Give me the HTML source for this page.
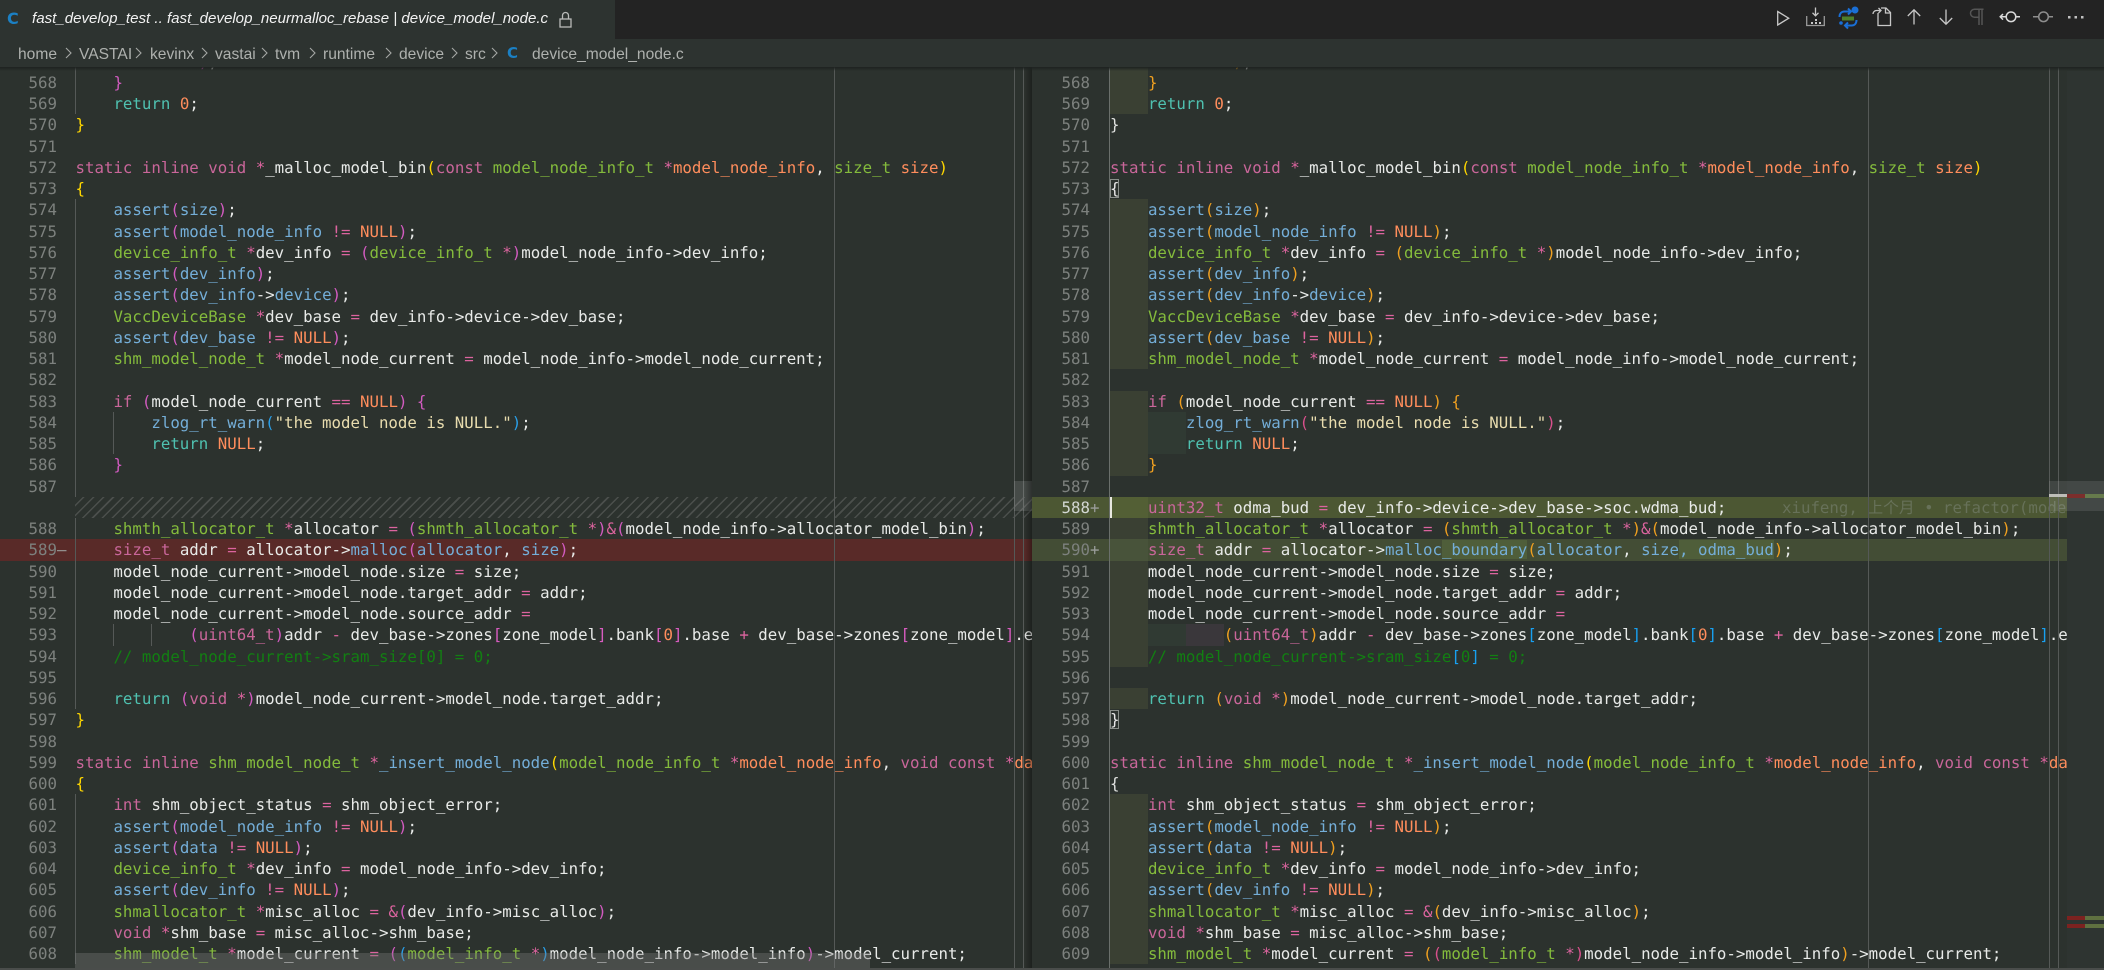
<!DOCTYPE html>
<html><head><meta charset="utf-8"><title>device_model_node.c</title>
<style>
html,body{margin:0;padding:0;width:2104px;height:970px;overflow:hidden;background:#2c322e}
*{box-sizing:border-box}
.abs{position:absolute}
.head{left:0;top:0;width:2104px;height:67px;z-index:5}
.tabbar{left:0;top:0;width:2104px;height:39px;background:#232323}
.tab{left:0;top:0;width:615px;height:39px;background:#2d3330}
.title{left:32px;top:9px;font:italic 15.08px/20px "Liberation Sans",sans-serif;color:#f2f2f2;white-space:pre}
.cic{font:bold 16px/20px "DejaVu Sans",sans-serif;color:#1b80c4}
.crumbs{left:0;top:39px;width:2104px;height:28px;background:#2d3330}
.cr{position:absolute;top:6px;font:15.6px/19px "Liberation Sans",sans-serif;color:#aeb1ae;white-space:pre}
.cr.cic{font:bold 15px/19px "DejaVu Sans",sans-serif;color:#1b80c4;top:5px}
.shadow{left:0;top:67px;width:2104px;height:4px;background:linear-gradient(#1e2220,rgba(30,34,32,0));z-index:5}
.pane{position:absolute;top:50.6px;height:919px;overflow:hidden;font-family:"DejaVu Sans Mono","Liberation Mono",monospace;font-size:15.75px;color:#e8eae8;text-rendering:geometricPrecision}
.L{left:0;width:1032px}
.R{left:1032px;width:1035px}
.l{position:relative;height:21.25px;line-height:21.25px;white-space:pre;background-repeat:no-repeat}
.l>i{position:absolute;left:0;top:0;font-style:normal;color:#7d817e;text-align:right}
.L .l>i{width:57px}
.R .l>i{width:58px}
.L .l{padding-left:75.5px}
.R .l{padding-left:78px}
.l>em{position:absolute;top:0;font-style:normal;color:#9a9d9a}
.L .g1{background-image:linear-gradient(#555957,#555957);background-position:75px 0;background-size:1px 100%}
.L .g2{background-image:linear-gradient(#555957,#555957),linear-gradient(#555957,#555957);background-position:75px 0,113px 0;background-size:1px 100%,1px 100%}
.L .g3{background-image:linear-gradient(#555957,#555957),linear-gradient(#555957,#555957),linear-gradient(#555957,#555957);background-position:75px 0,113px 0,151px 0;background-size:1px 100%,1px 100%,1px 100%}
.R .g1{background-image:linear-gradient(#3a4033,#3a4033);background-position:78px 0;background-size:38px 100%}
.R .g2{background-image:linear-gradient(#3a4033,#3a4033),linear-gradient(#303a33,#303a33);background-position:78px 0,116px 0;background-size:38px 100%,38px 100%}
.R .g3{background-image:linear-gradient(#3a4033,#3a4033),linear-gradient(#303a33,#303a33),linear-gradient(#3a373b,#3a373b);background-position:78px 0,116px 0,154px 0;background-size:38px 100%,38px 100%,38px 100%}
.del{background-color:#592a28}
.hatchwrap{position:relative;height:21.25px;padding-left:75px}
.hatchwrap div{height:100%;background:repeating-linear-gradient(135deg,#2c322e 0,#2c322e 5.5px,#4b4f4c 5.5px,#4b4f4c 7px)}
.add1{background-color:#4c5733}
.R .add1.g1{background-image:linear-gradient(#535f35,#535f35)}
.add2{background-color:#434d35}
.R .add2.g1{background-image:linear-gradient(#48533a,#48533a)}
.ch{background:#4f5e3a}
.k{color:#c9669a}.t{color:#84bb3c}.o{color:#dc649f}.p{color:#ff8d5c}.f{color:#74aed8}.r{color:#4fc1b0}.s{color:#e8dcae}.c{color:#127f12}
.y{color:#ffd700}
.R .w{color:#dfe1df}
.L .w{color:#ffd700}
.L .b{color:#d25bc0}.R .b{color:#f0a020}
.L .d{color:#2a9fe8}.R .d{color:#d8508c}
.L .e{color:#d85cc0}.R .e{color:#18a0f0}
.L .cb{color:#127f12}.R .cb{color:#18a0f0}
.box{outline:1px solid #8a8f8a;outline-offset:-1px;color:#e8e8e8}
.bl{color:#677159;font-family:"DejaVu Sans Mono","Noto Sans CJK SC",monospace;position:absolute;left:750px;top:0}
.v{position:absolute;width:1px;background:#555957;z-index:3}
.hs{left:75px;top:953px;width:795px;height:15px;background:rgba(121,121,121,.38);z-index:4}
.mk{position:absolute;z-index:4}
svg{position:absolute;overflow:visible}
</style></head><body>
<div class="abs head">
<div class="abs tabbar"></div>
<div class="abs tab"></div>
<div class="abs cic" style="left:7px;top:9px">C</div>
<div class="abs title">fast_develop_test .. fast_develop_neurmalloc_rebase | device_model_node.c</div>
<svg style="left:558px;top:11px" width="16" height="18" viewBox="0 0 16 18" fill="none" stroke="#b9bbb9" stroke-width="1.3"><rect x="2" y="8" width="11" height="8"/><path d="M4.5 8V4.5a3 3 0 0 1 6 0V8"/></svg>

<div class="abs crumbs">
<span class="cr" style="left:18px">home</span>
<span class="cr" style="left:79px">VASTAI</span>
<span class="cr" style="left:150px">kevinx</span>
<span class="cr" style="left:215px">vastai</span>
<span class="cr" style="left:275px">tvm</span>
<span class="cr" style="left:323px">runtime</span>
<span class="cr" style="left:399px">device</span>
<span class="cr" style="left:465px">src</span>
<span class="cr cic" style="left:507px">C</span>
<span class="cr" style="left:532px">device_model_node.c</span>
<svg style="left:0;top:0" width="520" height="28" fill="none" stroke="#a4a7a4" stroke-width="1.1"><path d="M66 9l5 5-5 5M136 9l5 5-5 5M202 9l5 5-5 5M262 9l5 5-5 5M310 9l5 5-5 5M386 9l5 5-5 5M452 9l5 5-5 5M492 9l5 5-5 5"/></svg>
</div>

<!-- toolbar icons -->
<svg style="left:0;top:0;z-index:6" width="2104" height="39" fill="none" stroke="#c8c8c8" stroke-width="1.3">
<path d="M1777.7 11.5v13.5l11-6.8z"/>
<path d="M1815.5 7.5v8M1812.5 12.8l3 3 3-3" />
<path d="M1806.7 16v9.5h17.6V16" stroke="#9a9a9a"/>
<g fill="#c8c8c8" stroke="none"><rect x="1811" y="22" width="2" height="2"/><rect x="1815" y="19" width="2" height="2"/><rect x="1815" y="22" width="2" height="2"/><rect x="1819" y="22" width="2" height="2"/></g>
<g stroke="#1a6fd6" stroke-width="2"><path d="M1839.5 17c0-3.5 2-5.5 5-5.5h6M1848 8.5l3 3-3 3"/><path d="M1856.5 20c0 3.5-2 5.5-5 5.5h-6M1848 28.500l-3-3 3-3"/></g>
<circle cx="1855" cy="10" r="3.500" fill="#1a6fd6" stroke="none"/>
<circle cx="1841" cy="23" r="1.800" fill="#1a6fd6" stroke="none"/>
<rect x="1842" y="16.500" width="12" height="4" fill="#4d7f2a" stroke="none"/>
<path d="M1878 13V25.500h12.500V12.500l-4.500-4.500h-5"/><path d="M1885.500 8v5h5"/><path d="M1873 14a3.500 3.500 0 0 1 3.500-3.500h4M1878.500 8l2.500 2.500-2.500 2.500"/>
<path d="M1914 24.500V10M1907.800 16l6.200-6.200 6.200 6.200"/>
<path d="M1946 9.500V24M1939.800 18l6.200 6.200 6.200-6.200"/>
<g stroke="#555"><path d="M1979 9v16M1982 9v16M1983.500 9.200h-9a4 4 0 0 0 0 8h4.500" stroke-width="1.500"/></g>
<g stroke="#dadada" stroke-width="1.500"><circle cx="2011" cy="16.800" r="4.800"/><path d="M2006 16.800h-5.500M2003 14l-2.800 2.800 2.800 2.800M2016 16.800h4"/></g>
<g stroke="#8e8e8e" stroke-width="1.500"><circle cx="2043.500" cy="16.800" r="4.800"/><path d="M2038.500 16.800h-5.500M2048.500 16.800h4.500"/></g>
<g fill="#c0c0c0" stroke="none"><rect x="2068" y="16" width="2.500" height="2.500"/><rect x="2074.500" y="16" width="2.500" height="2.500"/><rect x="2081" y="16" width="2.500" height="2.500"/></g>
</svg>
</div>
<div class="abs shadow"></div>

<!-- LEFT PANE -->
<div class="pane L">
<div class="l g1"><i></i>             <span class="b">)</span>;</div>
<div class="l g1"><i>568</i>    <span class="b">}</span></div>
<div class="l g1"><i>569</i>    <span class="r">return</span> <span class="p">0</span>;</div>
<div class="l"><i>570</i><span class="w">}</span></div>
<div class="l"><i>571</i></div>
<div class="l"><i>572</i><span class="k">static</span> <span class="k">inline</span> <span class="k">void</span> <span class="o">*</span>_malloc_model_bin<span class="y">(</span><span class="k">const</span> <span class="t">model_node_info_t</span> <span class="o">*</span><span class="p">model_node_info</span>, <span class="t">size_t</span> <span class="p">size</span><span class="y">)</span></div>
<div class="l"><i>573</i><span class="w">{</span></div>
<div class="l g1"><i>574</i>    <span class="f">assert</span><span class="b">(</span><span class="f">size</span><span class="b">)</span>;</div>
<div class="l g1"><i>575</i>    <span class="f">assert</span><span class="b">(</span><span class="f">model_node_info</span> <span class="o">!=</span> <span class="p">NULL</span><span class="b">)</span>;</div>
<div class="l g1"><i>576</i>    <span class="t">device_info_t</span> <span class="o">*</span>dev_info <span class="o">=</span> <span class="b">(</span><span class="t">device_info_t</span> <span class="o">*</span><span class="b">)</span>model_node_info-&gt;dev_info;</div>
<div class="l g1"><i>577</i>    <span class="f">assert</span><span class="b">(</span><span class="f">dev_info</span><span class="b">)</span>;</div>
<div class="l g1"><i>578</i>    <span class="f">assert</span><span class="b">(</span><span class="f">dev_info</span>-&gt;<span class="f">device</span><span class="b">)</span>;</div>
<div class="l g1"><i>579</i>    <span class="t">VaccDeviceBase</span> <span class="o">*</span>dev_base <span class="o">=</span> dev_info-&gt;device-&gt;dev_base;</div>
<div class="l g1"><i>580</i>    <span class="f">assert</span><span class="b">(</span><span class="f">dev_base</span> <span class="o">!=</span> <span class="p">NULL</span><span class="b">)</span>;</div>
<div class="l g1"><i>581</i>    <span class="t">shm_model_node_t</span> <span class="o">*</span>model_node_current <span class="o">=</span> model_node_info-&gt;model_node_current;</div>
<div class="l g1"><i>582</i></div>
<div class="l g1"><i>583</i>    <span class="k">if</span> <span class="b">(</span>model_node_current <span class="o">==</span> <span class="p">NULL</span><span class="b">)</span> <span class="b">{</span></div>
<div class="l g2"><i>584</i>        <span class="f">zlog_rt_warn</span><span class="d">(</span><span class="s">"the model node is NULL."</span><span class="d">)</span>;</div>
<div class="l g2"><i>585</i>        <span class="r">return</span> <span class="p">NULL</span>;</div>
<div class="l g1"><i>586</i>    <span class="b">}</span></div>
<div class="l g1"><i>587</i></div>
<div class="hatchwrap"><div></div></div>
<div class="l g1"><i>588</i>    <span class="t">shmth_allocator_t</span> <span class="o">*</span>allocator <span class="o">=</span> <span class="b">(</span><span class="t">shmth_allocator_t</span> <span class="o">*</span><span class="b">)</span><span class="o">&amp;</span><span class="b">(</span>model_node_info-&gt;allocator_model_bin<span class="b">)</span>;</div>
<div class="l g1 del"><i>589</i><em style="left:57px">—</em>    <span class="k">size_t</span> addr <span class="o">=</span> allocator-&gt;<span class="f">malloc</span><span class="b">(</span><span class="f">allocator</span>, <span class="f">size</span><span class="b">)</span>;</div>
<div class="l g1"><i>590</i>    model_node_current-&gt;model_node.size <span class="o">=</span> size;</div>
<div class="l g1"><i>591</i>    model_node_current-&gt;model_node.target_addr <span class="o">=</span> addr;</div>
<div class="l g1"><i>592</i>    model_node_current-&gt;model_node.source_addr <span class="o">=</span></div>
<div class="l g3"><i>593</i>            <span class="b">(</span><span class="k">uint64_t</span><span class="b">)</span>addr <span class="o">-</span> dev_base-&gt;zones<span class="e">[</span>zone_model<span class="e">]</span>.bank<span class="e">[</span><span class="p">0</span><span class="e">]</span>.base <span class="o">+</span> dev_base-&gt;zones<span class="e">[</span>zone_model<span class="e">]</span>.end;</div>
<div class="l g1"><i>594</i>    <span class="c">// model_node_current-&gt;sram_size[0] = 0;</span></div>
<div class="l g1"><i>595</i></div>
<div class="l g1"><i>596</i>    <span class="r">return</span> <span class="b">(</span><span class="k">void</span> <span class="o">*</span><span class="b">)</span>model_node_current-&gt;model_node.target_addr;</div>
<div class="l"><i>597</i><span class="w">}</span></div>
<div class="l"><i>598</i></div>
<div class="l"><i>599</i><span class="k">static</span> <span class="k">inline</span> <span class="t">shm_model_node_t</span> <span class="o">*</span><span class="f">_insert_model_node</span><span class="y">(</span><span class="t">model_node_info_t</span> <span class="o">*</span><span class="p">model_node_info</span>, <span class="k">void</span> <span class="k">const</span> <span class="o">*</span><span class="p">data</span>, <span class="t">size_t</span> <span class="p">size</span><span class="y">)</span></div>
<div class="l"><i>600</i><span class="w">{</span></div>
<div class="l g1"><i>601</i>    <span class="k">int</span> shm_object_status <span class="o">=</span> shm_object_error;</div>
<div class="l g1"><i>602</i>    <span class="f">assert</span><span class="b">(</span><span class="f">model_node_info</span> <span class="o">!=</span> <span class="p">NULL</span><span class="b">)</span>;</div>
<div class="l g1"><i>603</i>    <span class="f">assert</span><span class="b">(</span><span class="f">data</span> <span class="o">!=</span> <span class="p">NULL</span><span class="b">)</span>;</div>
<div class="l g1"><i>604</i>    <span class="t">device_info_t</span> <span class="o">*</span>dev_info <span class="o">=</span> model_node_info-&gt;dev_info;</div>
<div class="l g1"><i>605</i>    <span class="f">assert</span><span class="b">(</span><span class="f">dev_info</span> <span class="o">!=</span> <span class="p">NULL</span><span class="b">)</span>;</div>
<div class="l g1"><i>606</i>    <span class="t">shmallocator_t</span> <span class="o">*</span>misc_alloc <span class="o">=</span> <span class="o">&amp;</span><span class="b">(</span>dev_info-&gt;misc_alloc<span class="b">)</span>;</div>
<div class="l g1"><i>607</i>    <span class="k">void</span> <span class="o">*</span>shm_base <span class="o">=</span> misc_alloc-&gt;shm_base;</div>
<div class="l g1"><i>608</i>    <span class="t">shm_model_t</span> <span class="o">*</span>model_current <span class="o">=</span> <span class="b">(</span><span class="d">(</span><span class="t">model_info_t</span> <span class="o">*</span><span class="d">)</span>model_node_info-&gt;model_info<span class="b">)</span>-&gt;model_current;</div>
</div>

<!-- RIGHT PANE -->
<div class="pane R">
<div class="l g1"><i></i>             <span class="b">)</span>;</div>
<div class="l g1"><i>568</i>    <span class="b">}</span></div>
<div class="l g1"><i>569</i>    <span class="r">return</span> <span class="p">0</span>;</div>
<div class="l"><i>570</i><span class="w">}</span></div>
<div class="l"><i>571</i></div>
<div class="l"><i>572</i><span class="k">static</span> <span class="k">inline</span> <span class="k">void</span> <span class="o">*</span>_malloc_model_bin<span class="y">(</span><span class="k">const</span> <span class="t">model_node_info_t</span> <span class="o">*</span><span class="p">model_node_info</span>, <span class="t">size_t</span> <span class="p">size</span><span class="y">)</span></div>
<div class="l"><i>573</i><span class="y box">{</span></div>
<div class="l g1"><i>574</i>    <span class="f">assert</span><span class="b">(</span><span class="f">size</span><span class="b">)</span>;</div>
<div class="l g1"><i>575</i>    <span class="f">assert</span><span class="b">(</span><span class="f">model_node_info</span> <span class="o">!=</span> <span class="p">NULL</span><span class="b">)</span>;</div>
<div class="l g1"><i>576</i>    <span class="t">device_info_t</span> <span class="o">*</span>dev_info <span class="o">=</span> <span class="b">(</span><span class="t">device_info_t</span> <span class="o">*</span><span class="b">)</span>model_node_info-&gt;dev_info;</div>
<div class="l g1"><i>577</i>    <span class="f">assert</span><span class="b">(</span><span class="f">dev_info</span><span class="b">)</span>;</div>
<div class="l g1"><i>578</i>    <span class="f">assert</span><span class="b">(</span><span class="f">dev_info</span>-&gt;<span class="f">device</span><span class="b">)</span>;</div>
<div class="l g1"><i>579</i>    <span class="t">VaccDeviceBase</span> <span class="o">*</span>dev_base <span class="o">=</span> dev_info-&gt;device-&gt;dev_base;</div>
<div class="l g1"><i>580</i>    <span class="f">assert</span><span class="b">(</span><span class="f">dev_base</span> <span class="o">!=</span> <span class="p">NULL</span><span class="b">)</span>;</div>
<div class="l g1"><i>581</i>    <span class="t">shm_model_node_t</span> <span class="o">*</span>model_node_current <span class="o">=</span> model_node_info-&gt;model_node_current;</div>
<div class="l"><i>582</i></div>
<div class="l g1"><i>583</i>    <span class="k">if</span> <span class="b">(</span>model_node_current <span class="o">==</span> <span class="p">NULL</span><span class="b">)</span> <span class="b">{</span></div>
<div class="l g2"><i>584</i>        <span class="f">zlog_rt_warn</span><span class="d">(</span><span class="s">"the model node is NULL."</span><span class="d">)</span>;</div>
<div class="l g2"><i>585</i>        <span class="r">return</span> <span class="p">NULL</span>;</div>
<div class="l g1"><i>586</i>    <span class="b">}</span></div>
<div class="l"><i>587</i></div>
<div class="l g1 add1"><i style="color:#d4d8d4">588</i><em style="left:58px">+</em>    <span class="k">uint32_t</span> odma_bud <span class="o">=</span> dev_info-&gt;device-&gt;dev_base-&gt;soc.wdma_bud;<span class="bl">xiufeng, 上个月 • refactor(model_node): use boundary</span></div>
<div class="l g1"><i>589</i>    <span class="t">shmth_allocator_t</span> <span class="o">*</span>allocator <span class="o">=</span> <span class="b">(</span><span class="t">shmth_allocator_t</span> <span class="o">*</span><span class="b">)</span><span class="o">&amp;</span><span class="b">(</span>model_node_info-&gt;allocator_model_bin<span class="b">)</span>;</div>
<div class="l g1 add2"><i>590</i><em style="left:58px">+</em>    <span class="k">size_t</span> addr <span class="o">=</span> allocator-&gt;<span class="f">malloc<span class="ch">_boundary</span></span><span class="b">(</span><span class="f">allocator</span>, <span class="f">size<span class="ch">, odma_bud</span></span><span class="b">)</span>;</div>
<div class="l g1"><i>591</i>    model_node_current-&gt;model_node.size <span class="o">=</span> size;</div>
<div class="l g1"><i>592</i>    model_node_current-&gt;model_node.target_addr <span class="o">=</span> addr;</div>
<div class="l g1"><i>593</i>    model_node_current-&gt;model_node.source_addr <span class="o">=</span></div>
<div class="l g3"><i>594</i>            <span class="b">(</span><span class="k">uint64_t</span><span class="b">)</span>addr <span class="o">-</span> dev_base-&gt;zones<span class="e">[</span>zone_model<span class="e">]</span>.bank<span class="e">[</span><span class="p">0</span><span class="e">]</span>.base <span class="o">+</span> dev_base-&gt;zones<span class="e">[</span>zone_model<span class="e">]</span>.end;</div>
<div class="l g1"><i>595</i>    <span class="c">// model_node_current-&gt;sram_size</span><span class="cb">[</span><span class="c">0</span><span class="cb">]</span><span class="c"> = 0;</span></div>
<div class="l"><i>596</i></div>
<div class="l g1"><i>597</i>    <span class="r">return</span> <span class="b">(</span><span class="k">void</span> <span class="o">*</span><span class="b">)</span>model_node_current-&gt;model_node.target_addr;</div>
<div class="l"><i>598</i><span class="y box">}</span></div>
<div class="l"><i>599</i></div>
<div class="l"><i>600</i><span class="k">static</span> <span class="k">inline</span> <span class="t">shm_model_node_t</span> <span class="o">*</span><span class="f">_insert_model_node</span><span class="y">(</span><span class="t">model_node_info_t</span> <span class="o">*</span><span class="p">model_node_info</span>, <span class="k">void</span> <span class="k">const</span> <span class="o">*</span><span class="p">data</span>, <span class="t">size_t</span> <span class="p">size</span><span class="y">)</span></div>
<div class="l"><i>601</i><span class="w">{</span></div>
<div class="l g1"><i>602</i>    <span class="k">int</span> shm_object_status <span class="o">=</span> shm_object_error;</div>
<div class="l g1"><i>603</i>    <span class="f">assert</span><span class="b">(</span><span class="f">model_node_info</span> <span class="o">!=</span> <span class="p">NULL</span><span class="b">)</span>;</div>
<div class="l g1"><i>604</i>    <span class="f">assert</span><span class="b">(</span><span class="f">data</span> <span class="o">!=</span> <span class="p">NULL</span><span class="b">)</span>;</div>
<div class="l g1"><i>605</i>    <span class="t">device_info_t</span> <span class="o">*</span>dev_info <span class="o">=</span> model_node_info-&gt;dev_info;</div>
<div class="l g1"><i>606</i>    <span class="f">assert</span><span class="b">(</span><span class="f">dev_info</span> <span class="o">!=</span> <span class="p">NULL</span><span class="b">)</span>;</div>
<div class="l g1"><i>607</i>    <span class="t">shmallocator_t</span> <span class="o">*</span>misc_alloc <span class="o">=</span> <span class="o">&amp;</span><span class="b">(</span>dev_info-&gt;misc_alloc<span class="b">)</span>;</div>
<div class="l g1"><i>608</i>    <span class="k">void</span> <span class="o">*</span>shm_base <span class="o">=</span> misc_alloc-&gt;shm_base;</div>
<div class="l g1"><i>609</i>    <span class="t">shm_model_t</span> <span class="o">*</span>model_current <span class="o">=</span> <span class="b">(</span><span class="d">(</span><span class="t">model_info_t</span> <span class="o">*</span><span class="d">)</span>model_node_info-&gt;model_info<span class="b">)</span>-&gt;model_current;</div>
</div>

<!-- overlays -->
<div class="v" style="left:834px;top:67px;height:903px"></div>
<div class="v" style="left:1014px;top:67px;height:903px"></div>
<div class="v" style="left:1023px;top:67px;height:903px"></div>
<div class="v" style="left:1109px;top:67px;height:903px;background:#6a6f6b"></div>
<div class="v" style="left:1868px;top:67px;height:903px"></div>
<div class="v" style="left:2049px;top:67px;height:903px"></div>
<div class="v" style="left:2058px;top:67px;height:903px"></div>
<div class="mk" style="left:1110px;top:497px;width:2px;height:21px;background:#e8e8e0"></div>
<div class="mk" style="left:1014px;top:481px;width:18px;height:30px;background:rgba(200,200,200,.17)"></div>
<div class="mk" style="left:1024px;top:67px;width:8px;height:903px;background:linear-gradient(90deg,rgba(0,0,0,0),rgba(0,0,0,.35))"></div>
<div class="mk" style="left:2067px;top:71px;width:37px;height:899px;background:#2e3431"></div>
<div class="mk" style="left:2049px;top:481px;width:55px;height:30px;background:rgba(200,200,200,.14)"></div>
<div class="mk" style="left:2049px;top:494px;width:18px;height:3px;background:#bdbdb8"></div>
<div class="mk" style="left:2067px;top:494px;width:18px;height:4px;background:#7c2e2c"></div>
<div class="mk" style="left:2085px;top:494px;width:19px;height:4px;background:#667a4c"></div>
<div class="mk" style="left:2067px;top:916px;width:18px;height:4px;background:#7c2220"></div>
<div class="mk" style="left:2085px;top:916px;width:19px;height:4px;background:#5f7040"></div>
<div class="mk" style="left:2067px;top:924px;width:18px;height:4px;background:#7c2220"></div>
<div class="mk" style="left:2085px;top:924px;width:19px;height:4px;background:#5f7040"></div>
<div class="abs hs"></div>
<div class="mk" style="left:0;top:968px;width:2104px;height:2px;background:#4a4d4b"></div>
</body></html>
